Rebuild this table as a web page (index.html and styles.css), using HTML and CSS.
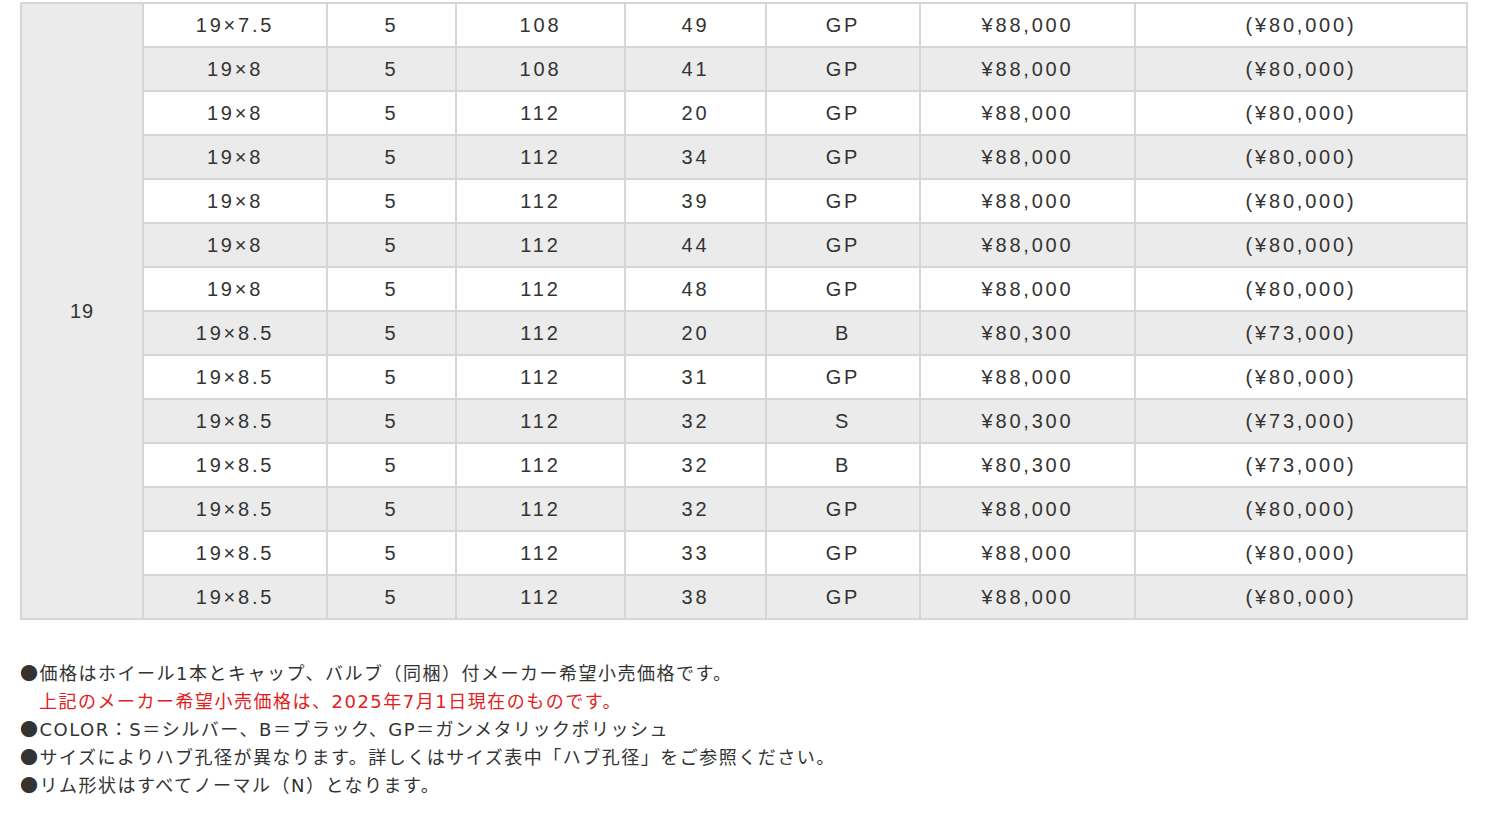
FILE: index.html
```html
<!DOCTYPE html>
<html lang="ja">
<head>
<meta charset="utf-8">
<title>サイズ表</title>
<link rel="stylesheet" href="styles.css">
</head>
<body>
<div class="page">
<table class="spec">
<colgroup>
<col class="c1"><col class="c2"><col class="c3"><col class="c4"><col class="c5"><col class="c6"><col class="c7"><col class="c8">
</colgroup>
<tbody>
<tr class="odd"><td class="inch" rowspan="14">19</td><td>19×7.5</td><td>5</td><td>108</td><td>49</td><td>GP</td><td>¥88,000</td><td>(¥80,000)</td></tr>
<tr class="even"><td>19×8</td><td>5</td><td>108</td><td>41</td><td>GP</td><td>¥88,000</td><td>(¥80,000)</td></tr>
<tr class="odd"><td>19×8</td><td>5</td><td>112</td><td>20</td><td>GP</td><td>¥88,000</td><td>(¥80,000)</td></tr>
<tr class="even"><td>19×8</td><td>5</td><td>112</td><td>34</td><td>GP</td><td>¥88,000</td><td>(¥80,000)</td></tr>
<tr class="odd"><td>19×8</td><td>5</td><td>112</td><td>39</td><td>GP</td><td>¥88,000</td><td>(¥80,000)</td></tr>
<tr class="even"><td>19×8</td><td>5</td><td>112</td><td>44</td><td>GP</td><td>¥88,000</td><td>(¥80,000)</td></tr>
<tr class="odd"><td>19×8</td><td>5</td><td>112</td><td>48</td><td>GP</td><td>¥88,000</td><td>(¥80,000)</td></tr>
<tr class="even"><td>19×8.5</td><td>5</td><td>112</td><td>20</td><td>B</td><td>¥80,300</td><td>(¥73,000)</td></tr>
<tr class="odd"><td>19×8.5</td><td>5</td><td>112</td><td>31</td><td>GP</td><td>¥88,000</td><td>(¥80,000)</td></tr>
<tr class="even"><td>19×8.5</td><td>5</td><td>112</td><td>32</td><td>S</td><td>¥80,300</td><td>(¥73,000)</td></tr>
<tr class="odd"><td>19×8.5</td><td>5</td><td>112</td><td>32</td><td>B</td><td>¥80,300</td><td>(¥73,000)</td></tr>
<tr class="even"><td>19×8.5</td><td>5</td><td>112</td><td>32</td><td>GP</td><td>¥88,000</td><td>(¥80,000)</td></tr>
<tr class="odd"><td>19×8.5</td><td>5</td><td>112</td><td>33</td><td>GP</td><td>¥88,000</td><td>(¥80,000)</td></tr>
<tr class="even"><td>19×8.5</td><td>5</td><td>112</td><td>38</td><td>GP</td><td>¥88,000</td><td>(¥80,000)</td></tr>
</tbody>
</table>
<div class="notes">
<p><span class="mark">●</span>価格はホイール1本とキャップ、バルブ（同梱）付メーカー希望小売価格です。</p>
<p class="red">上記のメーカー希望小売価格は、2025年7月1日現在のものです。</p>
<p><span class="mark">●</span>COLOR：S＝シルバー、B＝ブラック、GP＝ガンメタリックポリッシュ</p>
<p><span class="mark">●</span>サイズによりハブ孔径が異なります。詳しくはサイズ表中「ハブ孔径」をご参照ください。</p>
<p><span class="mark">●</span>リム形状はすべてノーマル（N）となります。</p>
</div>
</div>
</body>
</html>
```
FILE: styles.css
```css
html, body {
  margin: 0;
  padding: 0;
  background: #ffffff;
}
.page {
  padding: 2px 20px 0;
  color: #333333;
}
.spec {
  table-layout: fixed;
  width: 1448px;
  border-collapse: separate;
  border-spacing: 0;
  border-top: 2px solid #d6d6d6;
  border-left: 2px solid #d6d6d6;
  font-family: "Liberation Sans", Arial, "Noto Sans CJK JP", sans-serif;
  font-size: 20px;
  letter-spacing: 2.8px;
  color: #333333;
}
.c1 { width: 122px; }
.c2 { width: 184px; }
.c3 { width: 129px; }
.c4 { width: 169px; }
.c5 { width: 141px; }
.c6 { width: 154px; }
.c7 { width: 215px; }
.c8 { width: 332px; }
.spec tr {
  height: 44px;
}
.spec td {
  box-sizing: border-box;
  padding: 0;
  text-align: center;
  vertical-align: middle;
  border-right: 2px solid #d6d6d6;
  border-bottom: 2px solid #d6d6d6;
  line-height: 24px;
}
.odd td { background: #ffffff; }
.even td { background: #ebebeb; }
.spec td.inch {
  background: #ebebeb;
  letter-spacing: 0.05em;
}
.notes {
  margin-top: 40px;
  font-family: "DejaVu Sans", "Noto Sans CJK JP", sans-serif;
  font-size: 18px;
  letter-spacing: 1.5px;
  line-height: 28px;
  color: #333333;
}
.notes p {
  margin: 0;
}
.notes .mark {
  font-family: "Noto Sans CJK JP", sans-serif;
  line-height: 1;
}
.notes .red {
  color: #e3201b;
  padding-left: 19px;
}
```
